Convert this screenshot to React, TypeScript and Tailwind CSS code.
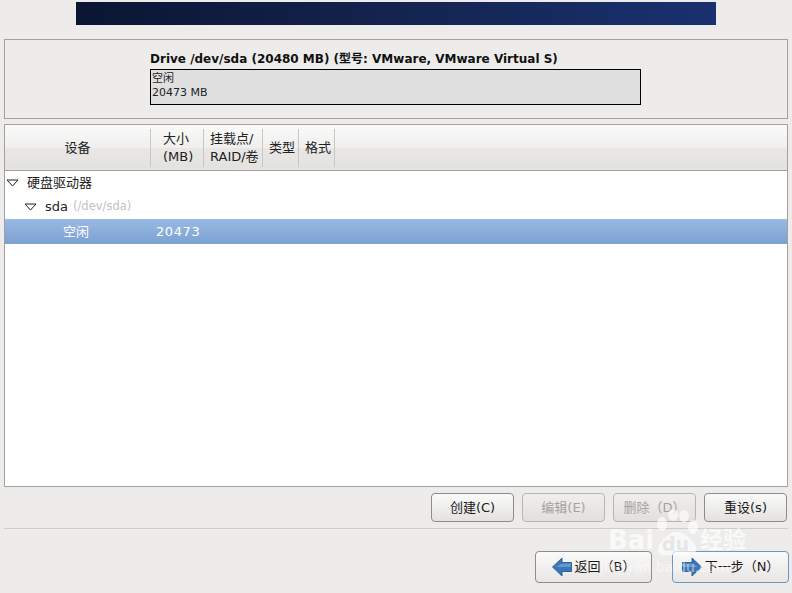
import React from 'react';

const FONT = { fontFamily: '"DejaVu Sans", "Noto Sans CJK SC", sans-serif' };

const columns = [
  { label: '大小\n(MB)', className: 'w-[53px] pl-[12px]' },
  { label: '挂载点/\nRAID/卷', className: 'w-[59px] pl-[6px]' },
  { label: '类型', className: 'w-[36px] pl-[6px]' },
  { label: '格式', className: 'w-[36px] pl-[6px]' },
];

// GTK tree expander, open state
const Expander = () => (
  <svg width="13" height="8" viewBox="0 0 13 8" className="shrink-0">
    <path d="M1 1H12L6.5 7Z" fill="#fff" stroke="#222" strokeWidth="1" />
  </svg>
);

const NavArrow = ({ flip }: { flip?: boolean }) => (
  <svg width="20" height="20" viewBox="0 0 20 20" className={flip ? 'shrink-0 -scale-x-100' : 'shrink-0'}>
    <path d="M0.5 10L10 1V5.5H19.5V14.5H10V19Z" fill="#3c76b4" stroke="#2f639c" strokeWidth="1" />
    <path d="M10 6.5H19V10H4Z" fill="#6498cf" />
  </svg>
);

const ActionButton = ({ label, disabled }: { label: string; disabled?: boolean }) => (
  <button
    className={`w-[83px] h-[29px] rounded-[4px] border text-[13px] flex items-center justify-center ${
      disabled
        ? 'border-[#b8b5b0] bg-gradient-to-b from-[#f0efed] to-[#e2e0dd] text-[#a5a29e]'
        : 'border-[#8f8c87] bg-gradient-to-b from-[#fafafa] to-[#e4e2df] text-[#1a1a1a]'
    }`}
  >
    {label}
  </button>
);

const NavButton = ({ children, focused }: { children: React.ReactNode; focused?: boolean }) => (
  <button
    className={`w-[117px] h-[32px] rounded-[4px] border text-[13px] text-[#1a1a1a] flex items-center justify-center gap-[3px] bg-gradient-to-b from-[#fafafa] to-[#e8e6e3] ${
      focused ? 'border-[#6f97c4]' : 'border-[#8f8c87]'
    }`}
  >
    {children}
  </button>
);

export default function App() {
  return (
    <div style={FONT} className="relative w-[792px] h-[593px] overflow-hidden bg-[#edecea] flex flex-col">
      {/* Banner */}
      <div className="mt-[2px] ml-[76px] w-[640px] h-[23px] bg-gradient-to-r from-[#0b1533] via-[#14244f] to-[#1a3070]" />

      {/* Drive summary */}
      <div className="mt-[14px] mx-[4px] h-[80px] border border-[#a3a19d] pl-[145px] pt-[11px]">
        <div className="text-[12px] leading-[16px] font-bold text-[#111] whitespace-nowrap">
          Drive /dev/sda (20480 MB) (型号: VMware, VMware Virtual S)
        </div>
        <div className="mt-[2px] w-[491px] h-[36px] border border-black bg-[#dfdfdf] pl-[1px] pt-[2px] text-[11px] leading-[14px] text-[#222]">
          <div>空闲</div>
          <div>20473 MB</div>
        </div>
      </div>

      {/* Partition table */}
      <div className="mt-[5px] mx-[4px] h-[363px] border border-[#a3a19d] bg-white flex flex-col">
        <div className="h-[46px] shrink-0 border-b border-[#a3a19d] bg-[linear-gradient(#fafafa,#f0efee_50%,#e8e7e5_52%,#e3e2df)] flex items-center text-[13px] leading-[18px] text-[#222]">
          <div className="w-[146px] h-[38px] border-r border-[#c9c7c3] flex items-center justify-center pt-[1px]">
            设备
          </div>
          {columns.map((col) => (
            <div
              key={col.label}
              className={`${col.className} h-[38px] border-r border-[#c9c7c3] flex items-center text-left whitespace-pre-line`}
            >
              {col.label}
            </div>
          ))}
        </div>

        <div className="h-[24px] flex items-center pl-[1px] text-[13px] text-[#222]">
          <Expander />
          <span className="ml-[8px]">硬盘驱动器</span>
        </div>
        <div className="h-[24px] flex items-center pl-[19px] text-[13px] text-[#222]">
          <Expander />
          <span className="ml-[8px]">sda</span>
          <span className="ml-[5px] text-[11.5px] text-[#c2c2c2]">(/dev/sda)</span>
        </div>
        <div className="h-[25px] flex items-center text-[13px] text-white bg-gradient-to-b from-[#9abae3] to-[#7ba0d1]">
          <span className="ml-[58px] w-[93px]">空闲</span>
          <span className="tracking-[0.6px]">20473</span>
        </div>
      </div>

      {/* Actions */}
      <div className="mt-[6px] mr-[5px] flex justify-end gap-[8px]">
        <ActionButton label="创建(C)" />
        <ActionButton label="编辑(E)" disabled />
        <ActionButton label="删除（D）" disabled />
        <ActionButton label="重设(s)" />
      </div>

      <div className="mt-[6px] mx-[4px] h-px bg-[#cfcdc9]" />

      {/* Navigation */}
      <div className="mt-[22px] mr-[3px] flex justify-end gap-[20px]">
        <NavButton>
          <NavArrow />
          <span>返回（B）</span>
        </NavButton>
        <NavButton focused>
          <NavArrow flip />
          <span>下一步（N）</span>
        </NavButton>
      </div>

      {/* Baidu watermark */}
      <svg width="44" height="48" viewBox="0 0 44 48" className="absolute left-[655px] top-[509px] pointer-events-none">
        <g fill="#fff" fillOpacity="0.65">
          <ellipse cx="7" cy="15" rx="5" ry="7" />
          <ellipse cx="18" cy="6" rx="5" ry="6" />
          <ellipse cx="29" cy="7" rx="5" ry="6" />
          <ellipse cx="38" cy="18" rx="5" ry="7" />
          <path d="M22 23C30 23 43 35 41 42C39 49 30 46 22 46C14 46 4 49 3 42C2 35 14 23 22 23Z" />
        </g>
      </svg>
      <div className="absolute left-[608px] top-[527px] text-[26px] leading-[26px] font-bold text-white/70 whitespace-nowrap pointer-events-none">
        Bai
      </div>
      <div className="absolute left-[662px] top-[534px] text-[19px] leading-[20px] font-bold text-[#e4e2df]/80 whitespace-nowrap pointer-events-none">
        du
      </div>
      <div className="absolute left-[700px] top-[528px] text-[23px] leading-[24px] font-bold text-white/70 whitespace-nowrap pointer-events-none">
        经验
      </div>
      <div className="absolute left-[600px] top-[559px] text-[14px] leading-[16px] text-white/50 whitespace-nowrap pointer-events-none">
        jingyan.baidu.com
      </div>
    </div>
  );
}
